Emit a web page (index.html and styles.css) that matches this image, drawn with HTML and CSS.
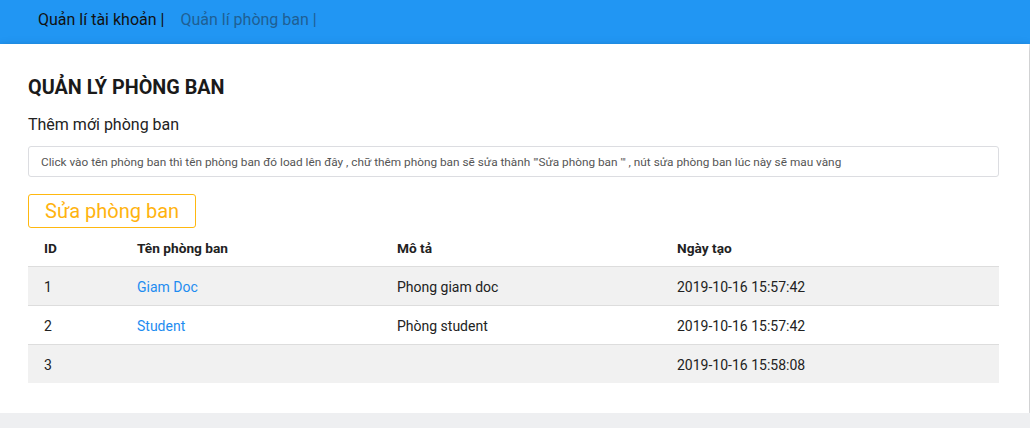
FILE: index.html
```html
<!DOCTYPE html>
<html lang="vi">
<head>
<meta charset="utf-8">
<title>Quản lý phòng ban</title>
<link rel="stylesheet" href="styles.css">
</head>
<body>
<nav class="topbar">
  <a class="nav-item active" href="#">Quản lí tài khoản |</a>
  <a class="nav-item" href="#">Quản lí phòng ban |</a>
</nav>
<main class="card">
  <h2 class="title">QUẢN LÝ PHÒNG BAN</h2>
  <div class="subtitle">Thêm mới phòng ban</div>
  <input class="field" type="text" placeholder="Click vào tên phòng ban thì tên phòng ban đó load lên đây , chữ thêm phòng ban sẽ sửa thành &quot;'Sửa phòng ban '&quot; , nút sửa phòng ban lúc này sẽ mau vàng">
  <button class="btn-edit" type="button">Sửa phòng ban</button>
  <table class="table">
    <colgroup>
      <col class="c1"><col class="c2"><col class="c3"><col class="c4">
    </colgroup>
    <thead>
      <tr><th>ID</th><th>Tên phòng ban</th><th>Mô tả</th><th>Ngày tạo</th></tr>
    </thead>
    <tbody>
      <tr><td>1</td><td><a href="#">Giam Doc</a></td><td>Phong giam doc</td><td>2019-10-16 15:57:42</td></tr>
      <tr><td>2</td><td><a href="#">Student</a></td><td>Phòng student</td><td>2019-10-16 15:57:42</td></tr>
      <tr><td>3</td><td></td><td></td><td>2019-10-16 15:58:08</td></tr>
    </tbody>
  </table>
</main>
</body>
</html>
```

FILE: styles.css
```css
html, body {
  margin: 0;
  padding: 0;
}
body {
  background: #eeeff1;
  font-family: Roboto, "Noto Sans", "Liberation Sans", sans-serif;
  font-size: 15px;
  line-height: 1.5;
  color: #222;
}
.topbar {
  background: #2196f3;
  height: 44px;
  display: flex;
  align-items: center;
  padding: 0 0 5px 38px;
  box-sizing: border-box;
  gap: 16px;
}
.nav-item {
  font-size: 16px;
  color: #1f5f93;
  text-decoration: none;
}
.nav-item.active {
  color: #111;
}
.card {
  display: block;
  background: #fff;
  margin-right: 1px;
  padding: 23px 30px 30px 28px;
  box-shadow: 0 2px 5px 0 rgba(0,0,0,0.16), 0 2px 10px 0 rgba(0,0,0,0.12);
}
.title {
  margin: 0;
  font-size: 19.8px;
  line-height: 42px;
  font-weight: 700;
  color: #1a1a1a;
}
.subtitle {
  font-size: 16px;
  line-height: 24px;
  margin-top: 4px;
  color: #222;
}
.field {
  display: block;
  width: 100%;
  box-sizing: border-box;
  height: 31px;
  margin-top: 9px;
  padding: 0 12px;
  border: 1px solid #dcdde1;
  border-radius: 3px;
  font-family: inherit;
  font-size: 11.8px;
  color: #444;
  outline: none;
}
.field::placeholder {
  color: #555;
}
.btn-edit {
  display: block;
  margin-top: 17px;
  height: 34px;
  padding: 0 16px;
  background: #fff;
  border: 1px solid #ffb80f;
  border-radius: 3px;
  color: #ffb30f;
  font-family: inherit;
  font-size: 20px;
  line-height: 30px;
  cursor: pointer;
}
.table {
  width: 100%;
  border-collapse: collapse;
  table-layout: fixed;
}
.c1 { width: 101px; }
.c2 { width: 260px; }
.c3 { width: 280px; }
.table th, .table td {
  padding: 9px 8px 7px;
  text-align: left;
  vertical-align: top;
  line-height: 22px;
}
.table th:first-child, .table td:first-child {
  padding-left: 16px;
}
.table th {
  font-weight: 700;
  font-size: 13.7px;
  color: #222;
}
.table thead tr {
  border-bottom: 1px solid #ddd;
}
.table tbody tr {
  border-bottom: 1px solid #ddd;
}
.table tbody tr:last-child {
  border-bottom: none;
}
.table tbody tr:nth-child(odd) {
  background: #f1f1f1;
}
.table td {
  font-size: 14px;
  color: #222;
}
.table a {
  color: #1e8cf0;
  text-decoration: none;
}
```
